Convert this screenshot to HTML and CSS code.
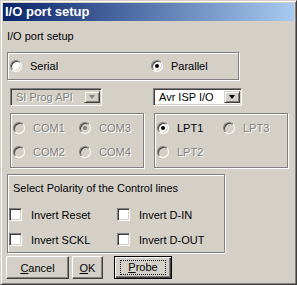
FILE: index.html
```html
<!DOCTYPE html>
<html lang="en">
<head>
    <meta charset="UTF-8">
    <title>I/O port setup</title>
    <link rel="stylesheet" href="styles.css">
</head>
<body>
    <div class="window">
        <div class="titlebar">I/O port setup</div>

        <div class="content">
            <div class="caption">I/O port setup</div>

            <div class="group type-group">
                <label class="opt type-opt"><span class="radio"></span>Serial</label>
                <label class="opt"><span class="radio checked"></span>Parallel</label>
            </div>

            <div class="combo-row">
                <div class="combo combo-api disabled">
                    <span class="combo-text">SI Prog API</span>
                    <span class="combo-btn"><span class="arrow"></span></span>
                </div>
                <div class="combo combo-isp">
                    <span class="combo-text">Avr ISP I/O</span>
                    <span class="combo-btn"><span class="arrow"></span></span>
                </div>
            </div>

            <div class="port-row">
                <div class="group ports disabled">
                    <label class="opt"><span class="radio"></span>COM1</label>
                    <label class="opt"><span class="radio checked"></span>COM3</label>
                    <label class="opt"><span class="radio"></span>COM2</label>
                    <label class="opt"><span class="radio"></span>COM4</label>
                </div>
                <div class="group ports">
                    <label class="opt"><span class="radio checked"></span>LPT1</label>
                    <label class="opt off"><span class="radio"></span>LPT3</label>
                    <label class="opt off"><span class="radio"></span>LPT2</label>
                </div>
            </div>

            <div class="group polarity">
                <div class="polarity-title">Select Polarity of the Control lines</div>
                <div class="checks">
                    <label class="check-opt"><span class="checkbox"></span>Invert Reset</label>
                    <label class="check-opt"><span class="checkbox"></span>Invert D-IN</label>
                    <label class="check-opt"><span class="checkbox"></span>Invert SCKL</label>
                    <label class="check-opt"><span class="checkbox"></span>Invert D-OUT</label>
                </div>
            </div>

            <div class="buttons">
                <button class="btn btn-cancel"><u>C</u>ancel</button>
                <button class="btn btn-ok"><u>O</u>K</button>
                <button class="btn btn-probe default"><span class="focus"><u>P</u>robe</span></button>
            </div>
        </div>
    </div>
</body>
</html>
```

FILE: styles.css
```css
* {
    margin: 0;
    padding: 0;
    box-sizing: border-box;
}

body {
    background-color: #d4d0c8;
    font-family: 'Liberation Sans', Arial, sans-serif;
    font-size: 11px;
    color: #000;
}

.window {
    width: 297px;
    height: 285px;
    background-color: #d4d0c8;
    border: 1px solid;
    border-color: #d4d0c8 #404040 #404040 #d4d0c8;
    box-shadow: inset 1px 1px 0 #fff, inset -1px -1px 0 #808080;
    padding: 2px;
}

.titlebar {
    height: 18px;
    line-height: 18px;
    padding-left: 2px;
    color: #fff;
    font-weight: bold;
    font-size: 13px;
    background: linear-gradient(to right, #0a246a, #a6caf0);
}

.content {
    padding-left: 4px;
}

.caption {
    margin-top: 9px;
    line-height: 13px;
}

/* etched group frame */
.group {
    border: 1px solid #808080;
    box-shadow: 1px 1px 0 #fff, inset 1px 1px 0 #fff;
}

.type-group {
    margin-top: 9px;
    width: 232px;
    height: 28px;
    display: flex;
    align-items: center;
    padding-left: 2px;
}

.opt {
    display: flex;
    align-items: center;
    line-height: 13px;
}

.type-opt {
    width: 141px;
}

.radio {
    width: 12px;
    height: 12px;
    margin-right: 8px;
    border-radius: 50%;
    border: 1px solid;
    border-color: #808080 #fff #fff #808080;
    background-color: #fff;
    box-shadow: inset 1px 1px 0 #404040, inset -1px -1px 0 #d4d0c8;
    position: relative;
    flex-shrink: 0;
}

.radio.checked::after {
    content: "";
    position: absolute;
    left: 3px;
    top: 3px;
    width: 4px;
    height: 4px;
    border-radius: 50%;
    background-color: #000;
}

.disabled .opt,
.opt.off {
    color: #808080;
    text-shadow: 1px 1px 0 #fff;
}

.disabled .radio,
.opt.off .radio {
    background-color: #d4d0c8;
}

.disabled .radio.checked::after {
    background-color: #808080;
}

.combo-row {
    display: flex;
    margin-top: 8px;
}

.combo {
    height: 18px;
    display: flex;
    border: 1px solid;
    border-color: #808080 #fff #fff #808080;
    box-shadow: inset 1px 1px 0 #404040, inset -1px -1px 0 #d4d0c8;
    background-color: #fff;
    padding: 2px;
}

.combo-api {
    width: 92px;
    margin-left: 3px;
}

.combo-isp {
    width: 89px;
    margin-left: 51px;
}

.combo-text {
    flex: 1;
    padding-left: 3px;
    line-height: 12px;
}

.combo.disabled {
    background-color: #d4d0c8;
}

.combo.disabled .combo-text {
    color: #808080;
    text-shadow: 1px 1px 0 #fff;
}

.combo-btn {
    width: 16px;
    height: 12px;
    margin: 0 -1px 0 0;
    background-color: #d4d0c8;
    border: 1px solid;
    border-color: #d4d0c8 #404040 #404040 #d4d0c8;
    box-shadow: inset 1px 1px 0 #fff, inset -1px -1px 0 #808080;
    display: flex;
    align-items: center;
    justify-content: center;
}

.arrow {
    width: 0;
    height: 0;
    border-left: 3.5px solid transparent;
    border-right: 3.5px solid transparent;
    border-top: 4px solid #000;
}

.combo.disabled .arrow {
    border-top-color: #808080;
}

.port-row {
    display: flex;
    gap: 10px;
    margin-top: 7px;
    padding-left: 3px;
}

.ports {
    width: 134px;
    height: 55px;
    display: grid;
    grid-template-columns: 66px 66px;
    grid-auto-rows: 24px;
    align-items: center;
    padding: 2px 0 0 2px;
}

.polarity {
    margin-top: 6px;
    width: 218px;
    height: 79px;
    padding: 7px 0 0 1px;
}

.polarity-title {
    line-height: 13px;
    padding-left: 4px;
}

.checks {
    margin-top: 7px;
    display: grid;
    grid-template-columns: 108px 100px;
    grid-auto-rows: 25px;
    align-items: center;
}

.check-opt {
    display: flex;
    align-items: center;
}

.checkbox {
    width: 13px;
    height: 13px;
    margin-right: 9px;
    border: 1px solid;
    border-color: #808080 #fff #fff #808080;
    background-color: #fff;
    box-shadow: inset 1px 1px 0 #404040, inset -1px -1px 0 #d4d0c8;
}

.buttons {
    display: flex;
    margin-top: 3px;
    margin-left: -1px;
}

.btn {
    height: 23px;
    font-family: inherit;
    font-size: 11px;
    color: #000;
    background-color: #d4d0c8;
    border: 1px solid;
    border-color: #fff #404040 #404040 #fff;
    box-shadow: inset -1px -1px 0 #808080;
    display: flex;
    align-items: center;
    justify-content: center;
}

.btn-cancel {
    width: 63px;
}

.btn-ok {
    width: 31px;
    margin-left: 3px;
}

.btn-probe {
    width: 58px;
    margin-left: 11px;
}

.btn.default {
    border: 1px solid #000;
    box-shadow: inset 1px 1px 0 #fff, inset -1px -1px 0 #404040, inset -2px -2px 0 #808080;
}

.focus {
    border: 1px dotted #000;
    width: 46px;
    height: 15px;
    line-height: 13px;
    text-align: center;
}
```
